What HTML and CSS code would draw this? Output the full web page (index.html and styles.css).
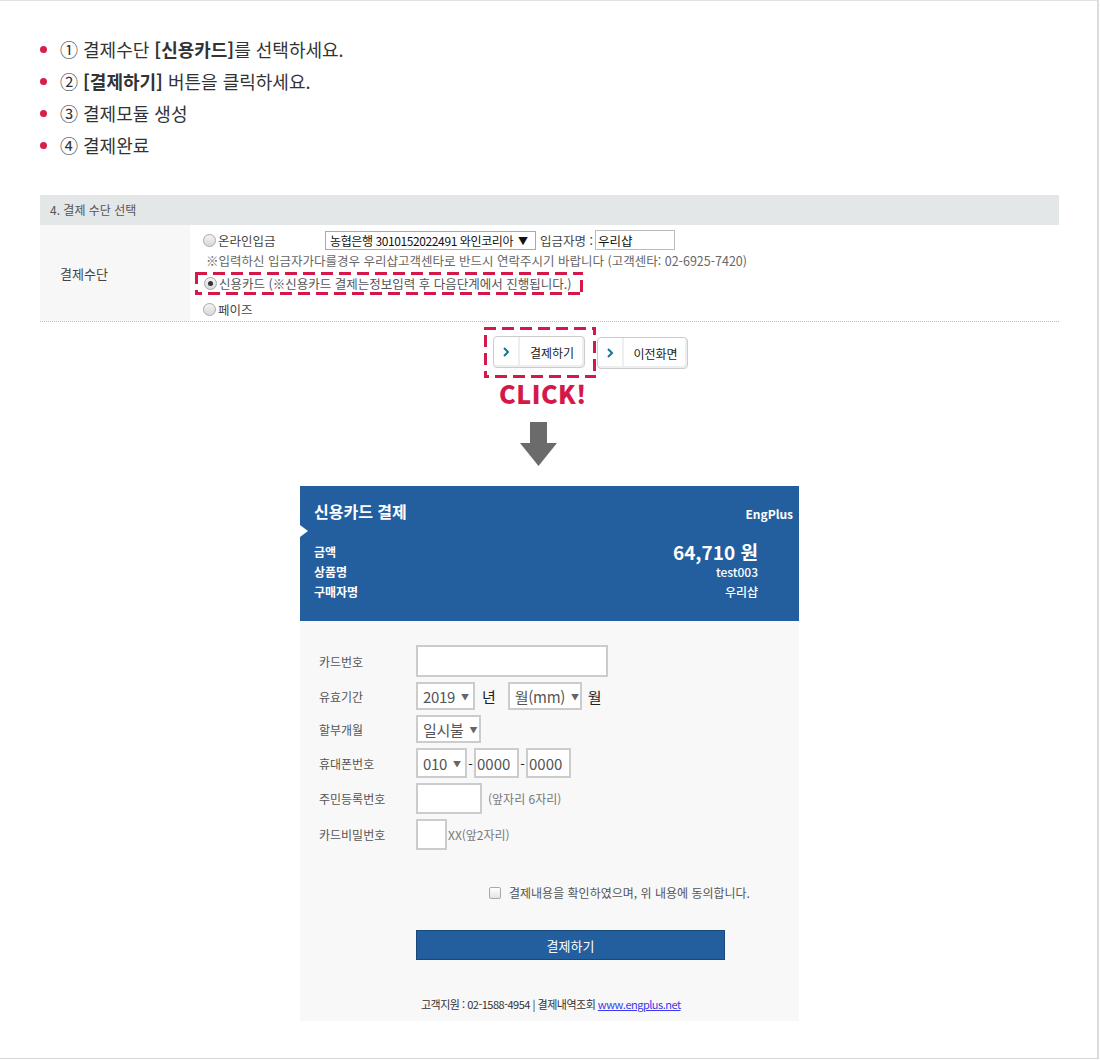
FILE: index.html
```html
<!DOCTYPE html>
<html lang="ko">
<head>
  <meta charset="UTF-8">
  <meta name="viewport" content="width=device-width, initial-scale=1.0">
  <title>결제 안내</title>
  <link rel="stylesheet" href="styles.css">
</head>
<body>
  <div class="page">
    <!-- 결제 순서 안내 -->
    <ul class="steps">
      <li>① 결제수단 <b>[신용카드]</b>를 선택하세요.</li>
      <li>② <b>[결제하기]</b> 버튼을 클릭하세요.</li>
      <li>③ 결제모듈 생성</li>
      <li>④ 결제완료</li>
    </ul>

    <!-- 결제 수단 선택 테이블 -->
    <div class="pay-table">
      <div class="pay-head">4. 결제 수단 선택</div>
      <div class="pay-row">
        <div class="pay-label">결제수단</div>
        <div class="pay-cell">
          <div class="line">
            <span class="radio"></span><span class="opt-name">온라인입금</span>
            <span class="bank-select">농협은행 3010152022491 와인코리아 <i>▼</i></span>
            <span class="depositor">입금자명 :</span>
            <span class="depositor-input">우리샵</span>
          </div>
          <div class="line note">※입력하신 입금자가다를경우 우리샵고객센타로 반드시 연락주시기 바랍니다 (고객센타: 02-6925-7420)</div>
          <div class="line card-line">
            <span class="radio checked"></span><span>신용카드 (※신용카드 결제는정보입력 후 다음단계에서 진행됩니다.)</span>
          </div>
          <div class="line">
            <span class="radio"></span><span>페이즈</span>
          </div>
        </div>
      </div>
    </div>

    <!-- 버튼 영역 -->
    <div class="btn-area">
      <div class="btn-focus">
        <span class="btn"><span class="btn-ico"><svg width="8" height="10" viewBox="0 0 8 10"><polyline points="2,1 6,5 2,9" fill="none" stroke="#117a8b" stroke-width="2"/></svg></span><span class="btn-txt">결제하기</span></span>
      </div>
      <span class="btn"><span class="btn-ico"><svg width="8" height="10" viewBox="0 0 8 10"><polyline points="2,1 6,5 2,9" fill="none" stroke="#117a8b" stroke-width="2"/></svg></span><span class="btn-txt">이전화면</span></span>
    </div>
    <div class="click">CLICK!</div>
    <div class="arrow">
      <svg width="37" height="44" viewBox="0 0 37 44"><rect x="10" y="0" width="17" height="22" fill="#6b6b6b"/><polygon points="0,21 37,21 18.5,44" fill="#6b6b6b"/></svg>
    </div>

    <!-- 결제창 -->
    <div class="card-pay">
      <div class="card-top">
        <span class="notch"></span>
        <div class="card-title">
          <h2>신용카드 결제</h2>
          <span class="brand">EngPlus</span>
        </div>
        <div class="card-info">
          <div class="info-left">
            <p>금액</p>
            <p>상품명</p>
            <p>구매자명</p>
          </div>
          <div class="info-right">
            <p class="amount">64,710 원</p>
            <p>test003</p>
            <p>우리샵</p>
          </div>
        </div>
      </div>

      <div class="card-body">
        <div class="frow">
          <label>카드번호</label>
          <span class="inp w192 h32"></span>
        </div>
        <div class="frow">
          <label>유효기간</label>
          <span class="sel w59">2019 <i>▼</i></span>
          <span class="unit">년</span>
          <span class="sel w74">월(mm) <i>▼</i></span>
          <span class="unit">월</span>
        </div>
        <div class="frow">
          <label>할부개월</label>
          <span class="sel w65">일시불 <i>▼</i></span>
        </div>
        <div class="frow">
          <label>휴대폰번호</label>
          <span class="sel w51 h30">010 <i>▼</i></span>
          <span class="dash">-</span>
          <span class="inp w45 h30 txt">0000</span>
          <span class="dash">-</span>
          <span class="inp w45 h30 txt">0000</span>
        </div>
        <div class="frow">
          <label>주민등록번호</label>
          <span class="inp w66 h31"></span>
          <span class="hint">(앞자리 6자리)</span>
        </div>
        <div class="frow">
          <label>카드비밀번호</label>
          <span class="inp w31 h31"></span>
          <span class="hint tight">XX(앞2자리)</span>
        </div>

        <div class="agree">
          <span class="chk"></span>결제내용을 확인하였으며, 위 내용에 동의합니다.
        </div>
        <div class="submit">결제하기</div>
        <div class="foot">고객지원 : 02-1588-4954 | 결제내역조회 <a href="#">www.engplus.net</a></div>
      </div>
    </div>
  </div>
</body>
</html>
```

FILE: styles.css
```css
body {
  margin: 0;
  background: #fff;
  font-family: "Noto Sans CJK KR", "Noto Sans", sans-serif;
  color: #333;
}
/* 전체 프레임 */

.page {
  box-sizing: border-box;
  width: 1099px;
  height: 1059px;
  border-top: 1px solid #e2e2e2;
  border-right: 2px solid #dcdcdc;
  border-bottom: 1px solid #d6d6d6;
  padding: 32px 38px 0 40px;
}

.steps {
  list-style: none;
  margin: 0;
  padding: 0;
}

.steps li {
  position: relative;
  padding-left: 20px;
  font-size: 18px;
  line-height: 32px;
  color: #333;
}

.steps li::before {
  content: "";
  position: absolute;
  left: 0;
  top: 13px;
  width: 7px;
  height: 7px;
  border-radius: 50%;
  background: #d71f48;
}

.steps b {
  font-weight: 700;
}
/* 결제 수단 선택 */

.pay-table {
  margin-top: 34px;
  border-bottom: 1px dotted #bdbdbd;
}

.pay-head {
  height: 30px;
  line-height: 30px;
  padding-left: 10px;
  background: #e4e7e8;
  font-size: 12px;
  color: #555;
}

.pay-row {
  display: flex;
  height: 96px;
}

.pay-label {
  width: 150px;
  background: #f7f7f7;
  font-size: 13px;
  color: #444;
  padding-left: 20px;
  box-sizing: border-box;
  display: flex;
  align-items: center;
}

.pay-cell {
  flex: 1;
  padding: 5px 0 0 13px;
  font-size: 12.5px;
  color: #444;
}

.line {
  display: flex;
  align-items: center;
  height: 20px;
  white-space: nowrap;
}

.note {
  padding-left: 3px;
  color: #666;
}

.card-line {
  box-sizing: border-box;
  width: 388px;
  height: 23px;
  margin: 2px 0 1px -8px;
  padding-left: 9px;
  background: url("data:image/svg+xml,%3Csvg xmlns='http://www.w3.org/2000/svg' width='100%25' height='100%25'%3E%3Crect width='100%25' height='100%25' fill='none' stroke='%23d4184a' stroke-width='6' stroke-dasharray='12 6'/%3E%3C/svg%3E");
  color: #555;
}

.card-line + .line {
  margin-top: 4px;
}

.radio {
  flex-shrink: 0;
  width: 11px;
  height: 11px;
  border-radius: 50%;
  border: 1px solid #a8a8a8;
  background: linear-gradient(#f4f4f4, #d8d8d8);
  margin-right: 2px;
  display: inline-flex;
  align-items: center;
  justify-content: center;
}

.radio.checked::after {
  content: "";
  width: 5px;
  height: 5px;
  border-radius: 50%;
  background: #333;
}

.opt-name {
  width: 107px;
}

.bank-select {
  box-sizing: border-box;
  width: 211px;
  height: 19px;
  border: 1px solid #a9a9a9;
  padding-left: 4px;
  font-size: 12px;
  letter-spacing: -0.4px;
  color: #111;
  display: flex;
  align-items: center;
  overflow: hidden;
}

.bank-select i {
  font-style: normal;
  font-size: 10px;
  margin-left: 5px;
}

.depositor {
  margin: 0 2px 0 4px;
}

.depositor-input {
  box-sizing: border-box;
  width: 80px;
  height: 20px;
  border: 1px solid #bbb;
  padding-left: 2px;
  color: #111;
  display: flex;
  align-items: center;
}
/* 버튼 영역 */

.btn-area {
  display: flex;
  align-items: flex-start;
  margin: 5px 0 0 444px;
}

.btn-focus {
  box-sizing: border-box;
  width: 112px;
  height: 51px;
  padding: 9px 0 0 9px;
  background: url("data:image/svg+xml,%3Csvg xmlns='http://www.w3.org/2000/svg' width='100%25' height='100%25'%3E%3Crect width='100%25' height='100%25' fill='none' stroke='%23d4184a' stroke-width='6' stroke-dasharray='12 6'/%3E%3C/svg%3E");
}

.btn {
  box-sizing: border-box;
  display: inline-flex;
  width: 92px;
  height: 32px;
  border: 1px solid #ccc;
  border-radius: 4px;
  background: #fff;
  box-shadow: inset -2px -2px 0 #eee;
  font-size: 12px;
  color: #222;
  white-space: nowrap;
}

.btn-area > .btn {
  margin: 10px 0 0 1px;
  width: 91px;
}

.btn-ico {
  width: 24px;
  border-right: 2px solid #eee;
  display: flex;
  align-items: center;
  justify-content: center;
}

.btn-txt {
  flex: 1;
  display: flex;
  align-items: center;
  justify-content: center;
}

.click {
  margin: 1px 0 0 459px;
  font-size: 25px;
  font-weight: 900;
  color: #d4184a;
  line-height: 28px;
  letter-spacing: 0.5px;
}

.arrow {
  margin: 15px 0 0 480px;
  height: 44px;
}

.arrow svg {
  display: block;
}
/* 결제창 */

.card-pay {
  width: 499px;
  margin: 20px 0 0 260px;
}

.card-top {
  position: relative;
  height: 135px;
  background: #235e9e;
  color: #fff;
  padding: 13px 6px 0 14px;
  box-sizing: border-box;
}

.notch {
  position: absolute;
  left: 0;
  top: 39px;
  border-left: 8px solid #fff;
  border-top: 6px solid transparent;
  border-bottom: 6px solid transparent;
}

.card-title {
  display: flex;
  justify-content: space-between;
  align-items: center;
}

.card-title h2 {
  margin: 0;
  font-size: 16px;
  font-weight: 700;
  line-height: 24px;
}

.brand {
  font-size: 12px;
  font-weight: 700;
  margin-top: 4px;
}

.card-info {
  display: flex;
  justify-content: space-between;
  margin: 17px 35px 0 0;
}

.card-info p {
  margin: 0;
  font-size: 12px;
  font-weight: 700;
  line-height: 20px;
}

.info-left {
  padding-top: 2px;
}

.info-right {
  text-align: right;
}

.info-right .amount {
  font-size: 19px;
  line-height: 24px;
  margin-bottom: -2px;
}

.info-right p:not(.amount) {
  font-weight: 500;
}

.card-body {
  background: #f8f8f8;
  height: 400px;
  padding: 24px 0 0 19px;
  box-sizing: border-box;
}

.frow {
  display: flex;
  align-items: center;
  margin-bottom: 5px;
  font-size: 12px;
  color: #555;
  white-space: nowrap;
}

.frow label {
  width: 97px;
}

.inp, .sel {
  flex-shrink: 0;
  box-sizing: border-box;
  display: inline-flex;
  align-items: center;
  border: 2px solid #ccc;
  background: #fff;
  height: 28px;
  font-size: 15px;
  color: #555;
  white-space: nowrap;
}

.sel {
  padding-left: 5px;
  letter-spacing: -0.3px;
}

.sel i {
  font-style: normal;
  font-size: 8px;
  color: #666;
  margin-left: 6px;
}

.txt {
  padding-left: 1px;
}

.w192 { width: 192px; }
.w59 { width: 59px; }
.w74 { width: 74px; }
.w65 { width: 65px; }
.w51 { width: 51px; }
.w45 { width: 45px; }
.w66 { width: 66px; }
.w31 { width: 31px; }
.h30 { height: 30px; }
.h31 { height: 31px; }
.h32 { height: 32px; }

.unit {
  font-size: 15px;
  color: #222;
  margin: 0 12px 0 7px;
}

.unit:last-child {
  margin-left: 6px;
}

.dash {
  color: #222;
  width: 7px;
  text-align: center;
  font-size: 13px;
}

.hint {
  margin-left: 6px;
  font-size: 12px;
  color: #777;
}

.hint.tight {
  margin-left: 1px;
}

.agree {
  display: flex;
  align-items: center;
  margin: 34px 0 0 170px;
  font-size: 12px;
  color: #555;
}

.chk {
  box-sizing: border-box;
  width: 12px;
  height: 12px;
  border: 1px solid #aaa;
  border-radius: 2px;
  background: linear-gradient(#fff, #e4e4e4);
  margin-right: 8px;
}

.submit {
  box-sizing: border-box;
  width: 309px;
  height: 30px;
  margin: 29px 0 0 97px;
  background: #235e9e;
  border: 1px solid #1a4877;
  color: #fff;
  font-size: 13px;
  display: flex;
  align-items: center;
  justify-content: center;
}

.foot {
  margin: 36px 0 0 102px;
  font-size: 11px;
  color: #333;
  letter-spacing: -0.5px;
}

.foot a {
  color: #3a3aee;
}
```
